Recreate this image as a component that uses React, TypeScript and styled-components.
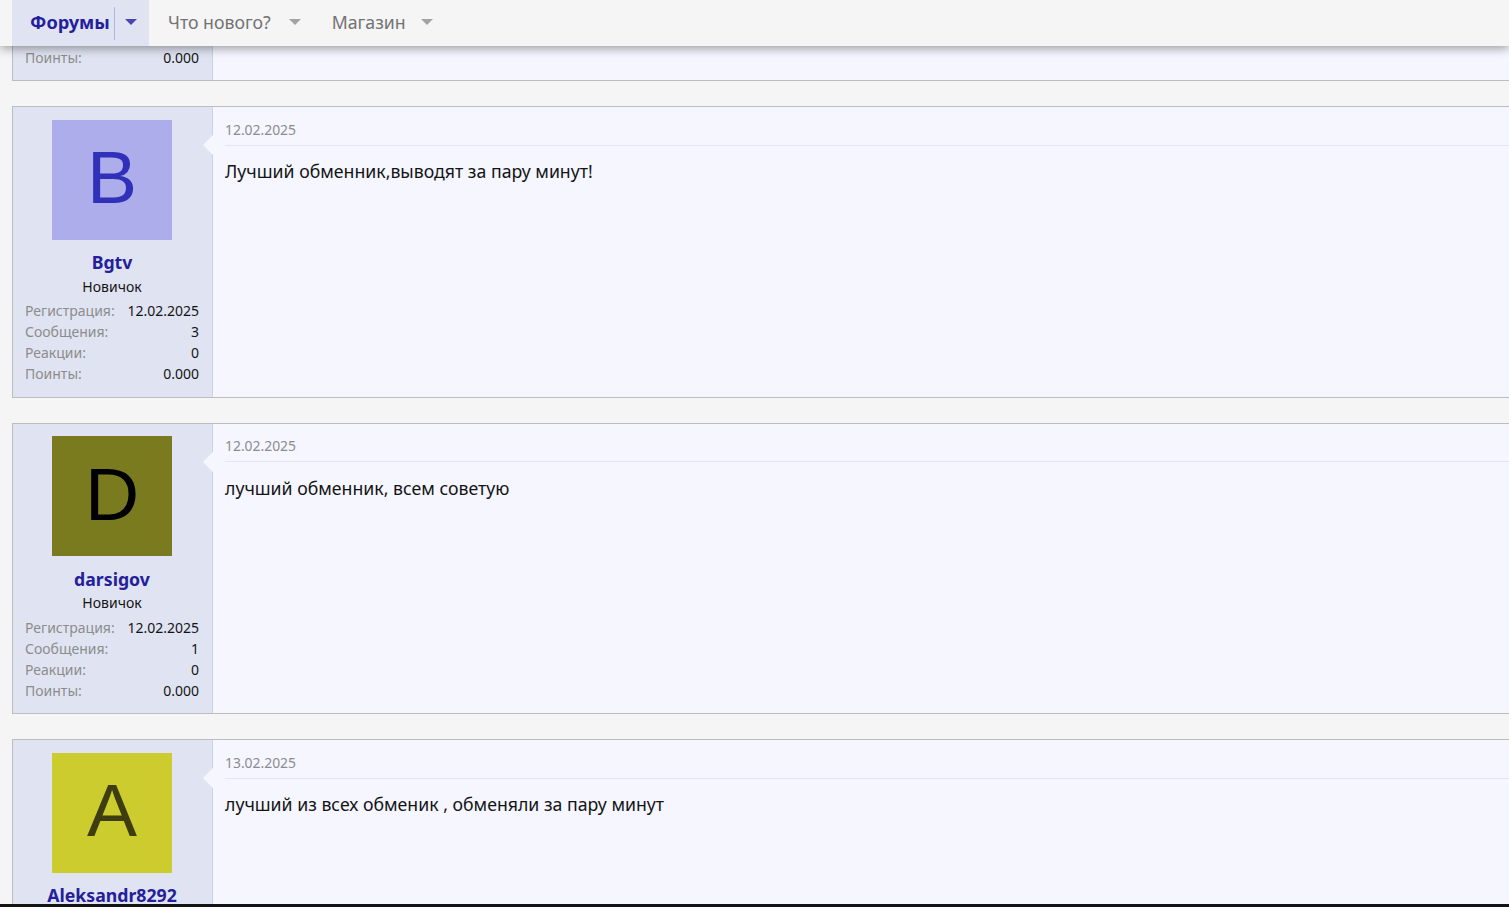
import React from "react";
import styled, { createGlobalStyle } from "styled-components";

const GlobalStyle = createGlobalStyle`
  html, body {
    margin: 0;
    padding: 0;
    background: #f5f5f5;
    font-family: "Noto Sans", "Open Sans", sans-serif;
    overflow: hidden;
  }
`;

type Stat = { label: string; value: string };

type Post = {
  letter: string;
  avatarBg: string;
  avatarFg: string;
  name: string;
  date: string;
  text: string;
  messages: string;
};

const posts: Post[] = [
  {
    letter: "B",
    avatarBg: "#adadeb",
    avatarFg: "#3030b8",
    name: "Bgtv",
    date: "12.02.2025",
    text: "Лучший обменник,выводят за пару минут!",
    messages: "3",
  },
  {
    letter: "D",
    avatarBg: "#7a7a1f",
    avatarFg: "#000000",
    name: "darsigov",
    date: "12.02.2025",
    text: "лучший обменник, всем советую",
    messages: "1",
  },
  {
    letter: "A",
    avatarBg: "#cccc2e",
    avatarFg: "#3d3d0f",
    name: "Aleksandr8292",
    date: "13.02.2025",
    text: "лучший из всех обменик , обменяли за пару минут",
    messages: "2",
  },
];

function Caret({ active }: { active?: boolean }) {
  return (
    <CaretIcon width="12" height="6" viewBox="0 0 12 6">
      <path d="M0 0h12L6 6z" fill={active ? "#4a46b0" : "#a3a3a3"} />
    </CaretIcon>
  );
}

function StatRows({ stats }: { stats: Stat[] }) {
  return (
    <Stats>
      {stats.map((s) => (
        <StatRow key={s.label}>
          <StatLabel>{s.label}</StatLabel>
          <StatValue>{s.value}</StatValue>
        </StatRow>
      ))}
    </Stats>
  );
}

export default function App() {
  return (
    <Page>
      <GlobalStyle />
      <Nav>
        <ActiveTab>
          <ActiveLabel>Форумы</ActiveLabel>
          <Splitter />
          <Caret active />
        </ActiveTab>
        <Tab $gap={18}>
          <TabLabel>Что нового?</TabLabel>
          <Caret />
        </Tab>
        <Tab $gap={15}>
          <TabLabel>Магазин</TabLabel>
          <Caret />
        </Tab>
      </Nav>
      <Thread>
        <CutCard>
          <CutSide>
            <StatRows stats={[{ label: "Поинты:", value: "0.000" }]} />
          </CutSide>
          <Main />
        </CutCard>
        {posts.map((p) => (
          <Card key={p.name}>
            <Side>
              <Avatar $bg={p.avatarBg} $fg={p.avatarFg}>
                {p.letter}
              </Avatar>
              <UserName>{p.name}</UserName>
              <UserTitle>Новичок</UserTitle>
              <StatRows
                stats={[
                  { label: "Регистрация:", value: p.date },
                  { label: "Сообщения:", value: p.messages },
                  { label: "Реакции:", value: "0" },
                  { label: "Поинты:", value: "0.000" },
                ]}
              />
            </Side>
            <Main>
              <Arrow />
              <PostDate>{p.date}</PostDate>
              <PostText>{p.text}</PostText>
            </Main>
          </Card>
        ))}
      </Thread>
      <BottomBar />
    </Page>
  );
}

const Page = styled.div`
  height: 907px;
  display: flex;
  flex-direction: column;
  overflow: hidden;
`;

const Nav = styled.nav`
  position: relative;
  z-index: 2;
  flex: none;
  height: 46px;
  padding-left: 12px;
  display: flex;
  background: #f5f5f5;
  box-shadow: 0 2px 10px rgba(0, 0, 0, 0.4);
`;

const Tab = styled.div<{ $gap: number }>`
  display: flex;
  align-items: center;
  gap: ${(p) => p.$gap}px;
  padding: 0 12px 2px 19px;
`;

const ActiveTab = styled.div`
  width: 137px;
  box-sizing: border-box;
  display: flex;
  align-items: center;
  padding: 0 0 2px 18px;
  background: #e0e4f2;
`;

const TabLabel = styled.span`
  font-size: 17.7px;
  color: #737373;
`;

const ActiveLabel = styled.span`
  font-size: 18.2px;
  font-weight: 700;
  color: #24209b;
`;

const Splitter = styled.span`
  flex: none;
  width: 1px;
  height: 33px;
  margin: 2px 10px 0 4px;
  background: #b4b6e2;
`;

const CaretIcon = styled.svg`
  flex: none;
`;

const Thread = styled.div`
  flex: 1;
  min-height: 0;
  overflow: hidden;
  display: flex;
  flex-direction: column;
  gap: 25px;
  padding-left: 12px;
`;

const Card = styled.article`
  flex: none;
  width: 1700px;
  box-sizing: border-box;
  height: 291.5px;
  display: flex;
  border: 1px solid #bdbdbd;
`;

const CutCard = styled(Card)`
  height: 35px;
  border-top: none;
`;

const Side = styled.aside`
  flex: none;
  width: 200px;
  box-sizing: border-box;
  padding: 12.8px 13px 0 12px;
  display: flex;
  flex-direction: column;
  align-items: center;
  background: #e0e4f2;
  border-right: 1px solid #cfd2e2;
`;

const CutSide = styled(Side)`
  padding-top: 0;
`;

const Avatar = styled.div<{ $bg: string; $fg: string }>`
  width: 120px;
  height: 120px;
  flex: none;
  box-sizing: border-box;
  padding-bottom: 4px;
  display: flex;
  align-items: center;
  justify-content: center;
  background: ${(p) => p.$bg};
  color: ${(p) => p.$fg};
  font-family: "Liberation Sans", Arial, sans-serif;
  font-size: 75px;
  line-height: 1;
`;

const UserName = styled.div`
  margin: 10.6px 0 0.4px;
  font-size: 17.7px;
  line-height: 24px;
  font-weight: 700;
  color: #24209b;
`;

const UserTitle = styled.div`
  font-size: 14px;
  line-height: 24px;
  color: #141414;
`;

const Stats = styled.div`
  width: 100%;
  margin-top: 1.3px;
`;

const StatRow = styled.div`
  display: flex;
  justify-content: space-between;
  font-size: 14px;
  line-height: 21px;
`;

const StatLabel = styled.span`
  color: #8c8c8c;
`;

const StatValue = styled.span`
  color: #141414;
`;

const Main = styled.div`
  position: relative;
  flex: 1;
  padding: 11.8px 12px 0;
  background: #f5f6ff;
`;

const Arrow = styled.span`
  position: absolute;
  left: -10px;
  top: 28px;
  border-style: solid;
  border-width: 10px 10px 10px 0;
  border-color: transparent #f5f6ff transparent transparent;
`;

const PostDate = styled.div`
  padding-bottom: 3.8px;
  font-size: 13.9px;
  line-height: 22px;
  color: #8c8c8c;
  border-bottom: 1px solid #e4e5f0;
`;

const PostText = styled.div`
  margin-top: 12.5px;
  font-size: 17.7px;
  line-height: 26px;
  color: #141414;
`;

const BottomBar = styled.div`
  flex: none;
  height: 3px;
  background: #141414;
`;
